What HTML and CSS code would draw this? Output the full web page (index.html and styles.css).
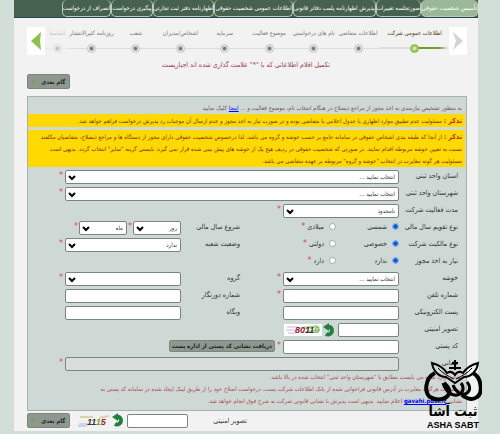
FILE: index.html
```html
<!DOCTYPE html>
<html lang="fa" dir="rtl">
  <head>
    <meta charset="UTF-8" />
    <meta name="viewport" content="width=device-width, initial-scale=1.0" />
    <title>تأسیس شخصیت حقوقی</title>
    <link rel="stylesheet" href="styles.css">
  </head>
  <body>
    <div class="page">
      <nav class="tabs">
        <a class="active" href="#">تأسیس شخصیت حقوقی</a>
        <a href="#">صورتجلسه تغییرات</a>
        <a href="#">پذیرش اظهارنامه پلمب دفاتر قانونی</a>
        <a href="#">اطلاعات عمومی شخصیت حقوقی</a>
        <a href="#">اظهارنامه دفتر ثبت تجارتی</a>
        <a href="#">پیگیری درخواست</a>
        <a href="#">انصراف از درخواست</a>
      </nav>

      <div class="wizard">
        <button class="arrow" type="button" aria-label="قبلی">
          <svg width="10" height="18" viewBox="0 0 10 18"><path d="M0 0L10 9L0 18L3 9Z" fill="#d4d4d4"/></svg>
        </button>
        <ol class="steps">
          <li class="current"><span>اطلاعات عمومی شرکت</span><i></i></li>
          <li><span>اطلاعات متقاضی</span><i></i></li>
          <li><span>نام های درخواستی</span><i></i></li>
          <li><span>موضوع فعالیت</span><i></i></li>
          <li><span>سرمایه</span><i></i></li>
          <li><span>اشخاص/مدیران</span><i></i></li>
          <li><span>شعب</span><i></i></li>
          <li><span>روزنامه کثیرالانتشار</span><i></i></li>
          <li class="faded"><span>اساسنا</span><i></i></li>
        </ol>
        <button class="arrow" type="button" aria-label="بعدی">
          <svg width="10" height="18" viewBox="0 0 10 18"><path d="M10 0L0 9L10 18L9 9Z" fill="#8bc34a"/></svg>
        </button>
      </div>

      <p class="required-note">تکمیل اقلام اطلاعاتی که با "*" علامت گذاری شده اند اجباریست</p>

      <form>
        <button class="next" type="button">گام بعدی <b></b></button>

        <div class="panel">
          <p class="hint">به منظور تشخیص نیازمندی به اخذ مجوز از مراجع ذیصلاح در هنگام انتخاب نام، موضوع فعالیت و ... <a href="#">اینجا</a> کلیک نمایید</p>
          <p class="notice"><b>تذکر :</b> مسئولیت عدم تطبیق موارد اظهاری با جدول اعلامی با متقاضی بوده و در صورت نیاز به اخذ مجوز و عدم ارسال آن موجبات رد پذیرش درخواست فراهم خواهد شد.</p>
          <p class="notice"><b>تذکر :</b> از آنجا که طبقه بندی اشخاص حقوقی در سامانه جامع بر حسب خوشه و گروه می باشد، لذا درخصوص شخصیت حقوقی دارای مجوز از دستگاه ها و مراجع ذیصلاح، متقاضیان مکلفند نسبت به تعیین خوشه مربوطه اقدام نمایند. در صورتی که شخصیت حقوقی در ردیف هیچ یک از خوشه های پیش بینی شده قرار نمی گیرد، بایستی گزینه "سایر" انتخاب گردد. بدیهی است مسئولیت هر گونه مغایرت در انتخاب "خوشه و گروه" مربوطه بر عهده متقاضی می باشد.</p>

          <div class="fields">
            <label for="province">استان واحد ثبتی</label>
            <select id="province" class="wide"><option>انتخاب نمایید ...</option></select>
            <em>*</em>

            <label for="city">شهرستان واحد ثبتی</label>
            <select id="city" class="wide"><option>انتخاب نمایید ...</option></select>
            <em>*</em>

            <label for="duration">مدت فعالیت شرکت</label>
            <select id="duration"><option>نامحدود</option></select>
            <em class="to-end">*</em>

            <span id="calendar">نوع تقویم سال مالی</span>
            <div class="radios" role="radiogroup" aria-labelledby="calendar">
              <label><input type="radio" name="calendar" checked> شمسی</label>
              <label><input type="radio" name="calendar"> میلادی<em>*</em></label>
            </div>
            <label class="second" for="day">شروع سال مالی</label>
            <div class="date">
              <select id="day"><option>روز</option></select>
              <em>*</em>
              <select aria-label="ماه"><option>ماه</option></select>
              <em>*</em>
            </div>

            <span id="ownership">نوع مالکیت شرکت</span>
            <div class="radios" role="radiogroup" aria-labelledby="ownership">
              <label><input type="radio" name="ownership" checked> خصوصی</label>
              <label><input type="radio" name="ownership"> دولتی<em>*</em></label>
            </div>
            <label class="second" for="branch">وضعیت شعبه</label>
            <select id="branch"><option>ندارد</option></select>
            <em>*</em>

            <span id="permit">نیاز به اخذ مجوز</span>
            <div class="radios to-end" role="radiogroup" aria-labelledby="permit">
              <label><input type="radio" name="permit" checked> ندارد</label>
              <label><input type="radio" name="permit"> دارد<em>*</em></label>
            </div>

            <label for="cluster">خوشه</label>
            <select id="cluster"><option>انتخاب نمایید ...</option></select>
            <em>*</em>
            <label class="second" for="group">گروه</label>
            <select id="group"><option></option></select>
            <em>*</em>

            <label for="phone">شماره تلفن</label>
            <input id="phone" type="text">
            <em>*</em>
            <label class="second" for="fax">شماره دورنگار</label>
            <input id="fax" type="text">

            <label for="email">پست الکترونیکی</label>
            <input id="email" type="text">
            <label class="second" for="site">وبگاه</label>
            <input id="site" type="text">

            <label for="code">تصویر امنیتی</label>
            <div class="captcha">
              <input id="code" type="text">
              <svg width="14" height="15" viewBox="0 0 14 15"><path d="M3 4H7A4 4 0 1 1 3 11" fill="none" stroke="#1f8040" stroke-width="4"/><path d="M6 0V8L0 4Z" fill="#1f8040"/></svg>
              <svg class="code-image" width="38" height="12" viewBox="0 0 38 12"><rect width="38" height="12" fill="#fff"/><path d="M3 3H14M2 6H16M4 9H12M26 3H36" stroke="#c9b5e4"/><path d="M18 4L34 2M22 8L36 6" stroke="#a8d68a" stroke-width="2"/><text x="11" y="9"><tspan fill="#9c2334">80</tspan><tspan fill="#333">11</tspan><tspan fill="#7bb04c">0</tspan></text></svg>
            </div>

            <label for="postal">کد پستی</label>
            <input id="postal" type="text">
            <div class="lookup"><em>*</em><button type="button">دریافت نشانی کد پستی از اداره پست</button></div>

            <label for="address">نشانی</label>
            <input id="address" class="wide" type="text" disabled>
            <em>*</em>
          </div>

          <p class="address-note">نشانی وارد شده می بایست مطابق با "شهرستان واحد ثبتی" انتخاب شده در بالا باشد.<br>
            در صورت هرگونه مغایرت در آدرس قانونی فراخوانی شده از بانک اطلاعات شرکت پست، درخواست اصلاح خود را از طریق لینک ایجاد شده در سامانه کد پستی به نشانی <a href="#">gavahi.post.ir</a> اعلام نمایید. بدیهی است پذیرش با نشانی قانونی شرکت به شرح فوق انجام خواهد شد.</p>
        </div>

        <div class="bottom">
          <label for="code2">تصویر امنیتی</label>
          <div class="captcha">
            <input id="code2" type="text">
            <svg width="14" height="15" viewBox="0 0 14 15"><path d="M3 4H7A4 4 0 1 1 3 11" fill="none" stroke="#1f8040" stroke-width="4"/><path d="M6 0V8L0 4Z" fill="#1f8040"/></svg>
            <svg class="code-image" width="34" height="12" viewBox="0 0 34 12"><path d="M2 9H12M1 11H10" stroke="#a9b4e4"/><path d="M3 2H16M22 3L32 1" stroke="#d9d3a8" stroke-width="2"/><text x="10" y="10"><tspan fill="#333">11</tspan><tspan fill="#7b9a2c">1</tspan><tspan fill="#9c2334">5</tspan></text></svg>
          </div>
          <button class="next" type="button">گام بعدی <b></b></button>
        </div>
      </form>

      <div class="brand">
        <svg width="58" height="43" viewBox="0 0 58 43" fill="none" stroke="#000">
          <path d="M31 0V10M28 3H34M25 8H37" stroke-width="2"/>
          <path d="M8 3C9 11 15 17 22 17L31 23L40 17C47 17 53 11 54 3C47 5 42 8 39 13C36 11 33 12 31 15C29 12 26 11 23 13C20 8 15 5 8 3Z" stroke-width="2"/>
          <path d="M14 8C18 13 24 16 30 19M48 8C44 13 38 16 32 19"/>
          <path d="M11 13C1 18 0 32 6 37C12 41 22 40 25 34C27 29 22 25 20 23" stroke-width="4"/>
          <path d="M19 23C22 32 28 36 33 35C39 34 41 28 37 23M29 25C31 31 38 37 43 33C47 30 46 25 43 22" stroke-width="3"/>
          <path d="M49 13C58 18 59 33 53 37C48 41 42 38 38 35" stroke-width="4"/>
        </svg>
        <strong>ثبت آشا</strong>
        <span>ASHA SABT</span>
      </div>
    </div>
  </body>
</html>
```
FILE: styles.css
```css
* {
  margin: 0;
  padding: 0;
  box-sizing: border-box;
}

:root {
  --bar: #47614f;
  --panel: #ced8d4;
  --red: #e0454c;
}

body {
  background-color: #d2dfd8;
  color: #333;
  font-family: "DejaVu Sans Condensed", "DejaVu Sans", sans-serif;
  font-size: 7px;
  line-height: 12px;
}

input,
select,
button {
  font: inherit;
  color: inherit;
}

.page {
  position: relative;
  margin: 0 22px 0 14px;
  padding-bottom: 3px;
  background: #f2f2f2;
}

.tabs {
  display: flex;
  height: 18px;
  background: var(--bar);
  border-bottom: 1px solid #24475a;
  font-size: 6px;
}

.tabs a {
  padding: 2px 0;
  border: 1px solid #b9cbb9;
  border-top: 0;
  border-radius: 5px;
  color: #fff;
  text-decoration: none;
  white-space: nowrap;
}

.tabs .active {
  background: #9ab897;
}

.wizard {
  display: flex;
  margin: 9px 11px 0 13px;
}

.arrow {
  flex: none;
  width: 18px;
  height: 28px;
  border: 0;
  background: #fff;
  line-height: 0;
}

.steps {
  display: flex;
  flex: 1;
  min-width: 0;
  overflow: hidden;
  list-style: none;
  color: #777;
  font-size: 6px;
}

.steps li {
  display: flex;
  flex: 0 0 11%;
  flex-direction: column;
  align-items: center;
  white-space: nowrap;
  background: linear-gradient(#dcdcdc, #dcdcdc) 0 21px / 100% 1px no-repeat;
}

.steps .current {
  flex-basis: 17%;
  color: #4a3513;
  background: linear-gradient(to right, #dcdcdc 50%, #6f9b2f 50%, #6f9b2f 85%, #f2f2f2) 0 20px / 100% 2px no-repeat;
}

.steps .faded {
  flex-basis: 6%;
  opacity: 0.4;
}

.steps i {
  width: 9px;
  height: 9px;
  margin-top: 5px;
  border: 1px solid #c4c4c4;
  border-radius: 50%;
  background: radial-gradient(#777 0 1px, #eee 3px);
}

.steps .current i {
  border-color: #8bc34a;
  background: radial-gradient(#d5e8b8 0 1px, #8bc34a 3px);
}

.required-note {
  margin-top: 4px;
  color: #9c3a4c;
  text-align: center;
}

.next {
  display: block;
  width: 43px;
  height: 15px;
  border: 1px solid #7d857d;
  border-radius: 2px;
  background: #8d988f;
  color: #222;
  font-size: 6px;
  font-weight: bold;
}

.next b {
  display: inline-block;
  width: 4px;
  height: 4px;
  margin-right: 4px;
  border-radius: 50%;
  background: #7d9d62;
}

form {
  padding: 3px 11px 0 13px;
}

form > .next {
  margin-right: auto;
}

.panel {
  margin-top: 7px;
  padding: 5px 0 3px;
  border: 1px solid #a9b1ad;
  background: var(--panel);
}

.hint {
  padding-right: 4px;
  color: #7b5258;
  font-size: 6px;
}

.hint a {
  color: #00f;
}

.notice {
  margin: 0 1px 3px 0;
  padding: 1px 3px 0 4px;
  background: #ffd900;
  color: #7a3000;
  font-size: 6px;
}

.notice b {
  color: #c02a00;
  font-size: 7px;
}

.fields {
  display: grid;
  grid-template-columns: 59px 116fr 43px 59px 116fr 37px;
  grid-auto-rows: 14px;
  row-gap: 3px;
  padding-right: 8px;
}

.fields > label,
.fields > span {
  grid-column: 1;
  white-space: nowrap;
}

.fields > .second {
  grid-column: 4;
}

.fields .wide {
  grid-column: 2 / 6;
}

.fields em.to-end {
  grid-column: 3 / 7;
}

input[type="text"],
select {
  width: 100%;
  min-width: 0;
  height: 14px;
  padding: 0 3px;
  border: 1px solid #7c8481;
  border-radius: 2px;
  background-color: #fff;
}

select {
  appearance: none;
  background-image: url("data:image/svg+xml,%3Csvg xmlns='http://www.w3.org/2000/svg' width='8' height='6'%3E%3Cpath d='M1 1L4 4L7 1' fill='none' stroke='%23000' stroke-width='2'/%3E%3C/svg%3E");
  background-position: 2px 4px;
  background-repeat: no-repeat;
  font-size: 6px;
}

input[type="text"]:disabled {
  background-color: #d9dddb;
}

em {
  padding-right: 2px;
  color: var(--red);
  font-size: 9px;
  font-style: normal;
  line-height: 10px;
}

.radios {
  display: flex;
  grid-column: 2 / 4;
}

.radios.to-end {
  grid-column: 2 / 7;
}

.radios label {
  display: flex;
  flex: none;
  gap: 5px;
  width: 63px;
}

.radios em {
  margin-right: -5px;
}

input[type="radio"] {
  appearance: none;
  width: 7px;
  height: 7px;
  margin-top: 2px;
  border: 1px solid #a5aaa8;
  border-radius: 50%;
  background: #fff;
}

input[type="radio"]:checked {
  border-color: #82ade8;
  background: radial-gradient(#0b62d6 0 2px, #dce9fb 3px);
}

.date {
  display: flex;
  grid-column: 5 / 7;
}

.date select {
  flex: none;
  width: 48px;
}

.date em {
  padding: 0;
  width: 6px;
  text-align: center;
}

.captcha {
  display: flex;
  align-items: center;
  gap: 1px;
}

.captcha input {
  flex: none;
  width: 61px;
}

.captcha svg {
  flex: none;
}

.code-image {
  direction: ltr;
  font-family: "Liberation Sans", Arial, sans-serif;
  font-size: 9px;
  font-style: italic;
  font-weight: bold;
}

.lookup {
  display: flex;
  grid-column: 3 / 7;
  gap: 2px;
}

.lookup button {
  width: 106px;
  height: 12px;
  border: 1px solid #7d857d;
  border-radius: 2px;
  background: #8d988f;
  color: #222;
  font-size: 6px;
  font-weight: bold;
  line-height: 10px;
  white-space: nowrap;
}

.address-note {
  padding: 0 4px 0 60px;
  color: #b04a52;
  font-size: 6px;
}

.address-note a {
  color: #00f;
  font-weight: bold;
}

.bottom {
  display: flex;
  align-items: center;
  margin-top: 2px;
}

.bottom label {
  width: 59px;
  margin-right: auto;
}

.bottom .next {
  margin-right: 7px;
}

.brand {
  position: absolute;
  right: -4px;
  bottom: 0;
  display: flex;
  flex-direction: column;
  align-items: center;
  width: 58px;
  color: #000;
}

.brand strong {
  font-size: 14px;
  line-height: 16px;
}

.brand span {
  direction: ltr;
  font-family: "Liberation Sans", Arial, sans-serif;
  font-size: 9px;
  font-weight: bold;
  line-height: 12px;
}
```
